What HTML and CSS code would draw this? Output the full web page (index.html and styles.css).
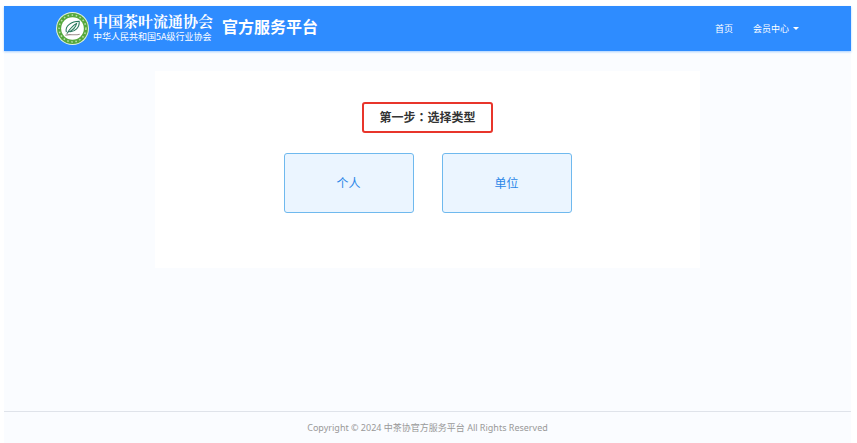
FILE: index.html
```html
<!DOCTYPE html>
<html lang="zh-CN">
<head>
    <meta charset="UTF-8">
    <meta name="viewport" content="width=device-width, initial-scale=1.0">
    <title>官方服务平台</title>
    <link rel="stylesheet" href="styles.css">
</head>
<body>
    <div class="page">
        <header class="navbar">
            <a class="brand" href="#">
                <svg class="brand-logo" viewBox="0 0 64 64" aria-hidden="true">
                    <circle cx="32" cy="32" r="32" fill="#e4f3df"/>
                    <circle cx="32" cy="32" r="30" fill="#55a83c"/>
                    <circle cx="32" cy="32" r="26" fill="none" stroke="#b9dcab" stroke-width="3" stroke-dasharray="3 5"/>
                    <circle cx="32" cy="32" r="22" fill="#fff"/>
                    <path d="M20 39C17 27 30 18 45 18C46 30 37 39 26 38" fill="none" stroke="#26775b" stroke-width="2"/>
                    <path d="M21 42C27 32 33 26 40 22C38 31 32 36 24 39" fill="#dcefe4" stroke="#26775b" stroke-width="2"/>
                    <path d="M18 45C27 42 34 46 46 43" fill="none" stroke="#9b8f8c" stroke-width="2"/>
                </svg>
                <span class="brand-name">
                    <span class="brand-main">中国茶叶流通协会</span>
                    <span class="brand-sub">中华人民共和国5A级行业协会</span>
                </span>
                <span class="brand-title">官方服务平台</span>
            </a>
            <nav class="nav">
                <a href="#">首页</a>
                <a class="dropdown" href="#">会员中心</a>
            </nav>
        </header>

        <main class="main">
            <section class="card">
                <h1 class="step-title">第一步<span class="colon" lang="zh-TW">：</span>选择类型</h1>
                <div class="types">
                    <button class="type" type="button">个人</button>
                    <button class="type" type="button">单位</button>
                </div>
            </section>
        </main>

        <footer class="footer">Copyright © 2024 中茶协官方服务平台 All Rights Reserved</footer>
    </div>
</body>
</html>
```

FILE: styles.css
```css
* {
    box-sizing: border-box;
}
body {
    margin: 0;
    padding: 6px 6px 0 4px;
    background: #fff;
    font-family: "Noto Sans", "Noto Sans CJK SC", sans-serif;
}
.page {
    display: flex;
    flex-direction: column;
    min-height: calc(100vh - 6px);
    background: #fafcff;
}
a {
    color: inherit;
    text-decoration: none;
}

/* top bar */
.navbar {
    display: flex;
    align-items: center;
    justify-content: space-between;
    height: 45px;
    padding: 0 52px;
    background: #2e8cff;
    color: #fff;
    box-shadow: 0 1px 2px rgba(46, 140, 255, 0.4);
}
.brand {
    display: flex;
    align-items: center;
}
.brand-logo {
    width: 33px;
    height: 33px;
    margin-right: 4px;
}
.brand-name {
    display: flex;
    flex-direction: column;
    margin-right: 9px;
    padding-bottom: 4px;
}
.brand-main {
    font-family: "Noto Serif CJK SC", "Noto Sans CJK SC", serif;
    font-size: 15px;
    font-weight: 700;
    line-height: 20px;
}
.brand-sub {
    font-family: "Noto Sans CJK SC", sans-serif;
    font-size: 9px;
    line-height: 12px;
}
.brand-title {
    font-size: 16px;
    font-weight: 700;
    line-height: 20px;
    padding-bottom: 4px;
}
.nav {
    display: flex;
    gap: 20px;
    font-size: 9px;
}
.dropdown {
    display: flex;
    align-items: center;
    gap: 4px;
}
.dropdown::after {
    content: "";
    border: 3px solid transparent;
    border-top-color: #fff;
    border-bottom: 0;
}

/* type selection */
.main {
    flex: 1;
    padding: 20px 151px;
}
.card {
    display: flex;
    flex-direction: column;
    align-items: center;
    gap: 20px;
    padding: 31px 20px 55px;
    background: #fff;
}
.step-title {
    margin: 0;
    padding: 3px 15px;
    border: 2px solid #e8352b;
    border-radius: 3px;
    color: #333;
    font-size: 12px;
    line-height: 20px;
}
.colon {
    font-family: "Noto Sans CJK TC", sans-serif;
}
.types {
    display: flex;
    gap: 28px;
}
.type {
    width: 130px;
    height: 60px;
    border: 1px solid #6fb9ee;
    border-radius: 3px;
    background: #ebf5ff;
    color: #2a86e8;
    font-family: inherit;
    font-size: 12px;
    cursor: pointer;
}

.footer {
    padding: 10px 0 9px;
    border-top: 1px solid #dfe3ea;
    color: #999;
    font-size: 9px;
    line-height: 12px;
    text-align: center;
}
```
